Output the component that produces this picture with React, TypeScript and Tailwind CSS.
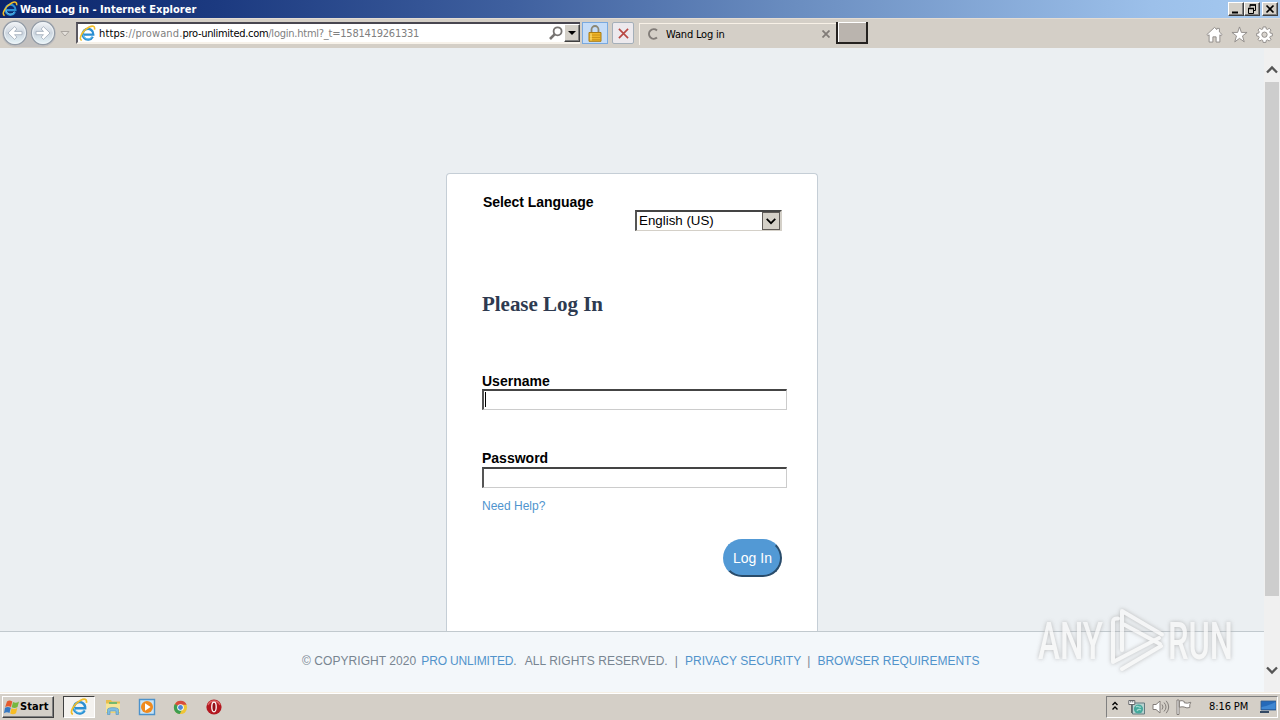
import type { ReactNode } from "react";

const tahoma = "font-['DejaVu_Sans_Condensed','DejaVu_Sans',sans-serif]";

function IeIcon({ className }: { className: string }) {
  return (
    <svg viewBox="0 0 18 18" className={className} fill="none" aria-hidden>
      <path d="M14.6 12.4A5.7 5.7 0 1 1 15.2 10.2H5" stroke="#2b8fd3" strokeWidth="2.4" />
      <path d="M14 12.2A5.2 5.2 0 0 1 4.3 10" stroke="#6cc8f2" strokeWidth="1" />
      <path d="M3 16.2C-1.3 15.5 3.8 5.7 10.8 2.2C14.4.4 17.2.8 16.4 4.8" stroke="#f1bd28" strokeWidth="1.7" />
    </svg>
  );
}

function NavButton({ flip }: { flip?: boolean }) {
  return (
    <svg viewBox="0 0 26 26" className={flip ? "size-[26px] -scale-x-100" : "size-[26px]"} aria-hidden>
      <defs>
        <linearGradient id="nav" x1="0" y1="0" x2="0" y2="1">
          <stop offset="0" stopColor="#f5f6f8" />
          <stop offset=".5" stopColor="#ccd5df" />
          <stop offset="1" stopColor="#e8f7fb" />
        </linearGradient>
      </defs>
      <circle cx="13" cy="13" r="11.6" fill="url(#nav)" stroke="#929ba6" strokeWidth="1.2" />
      <circle cx="13" cy="13" r="10.4" fill="none" stroke="#eef3f7" />
      <path d="M6 13l6.5-6.3 2.4 2.3-2.4 2.4H20v3.3h-7.5l2.4 2.4-2.4 2.3z" fill="#fff" stroke="#9fabb9" strokeWidth=".8" />
    </svg>
  );
}

function WindowButton({ children }: { children: ReactNode }) {
  return (
    <div className="h-[14px] w-4 border border-t-white border-r-[#404040] border-b-[#404040] border-l-white bg-[#d4d0c8] shadow-[inset_-1px_-1px_0_#808080]">
      <svg viewBox="0 0 14 12" className="h-3 w-[14px]" fill="none" stroke="#000" aria-hidden>
        {children}
      </svg>
    </div>
  );
}

function TitleBar() {
  return (
    <header className="flex h-[18px] items-center bg-[linear-gradient(90deg,#0a246a_0%,#1c3a80_17%,#3f609f_40%,#6a8dc0_62%,#9cc0ea_90%,#a6caf0_100%)] pr-[2px] pl-[2px]">
      <IeIcon className="size-4" />
      <span className={`${tahoma} ml-[2px] text-[11px] leading-none font-bold tracking-[0.02px] whitespace-nowrap text-white`}>
        Wand Log in - Internet Explorer
      </span>
      <div className="ml-auto flex">
        <WindowButton>
          <path d="M3 9.5h6" strokeWidth="2" />
        </WindowButton>
        <WindowButton>
          <path d="M5 2h6M5 1.5v3M10.5 2v5.5H8M3 5.5h5.5M3.5 5v5.5h5V5" />
          <path d="M3 5.5h6M5 2h6" strokeWidth="1.6" />
        </WindowButton>
        <div className="ml-[2px]">
          <WindowButton>
            <path d="M3.5 2.5l7 7m0-7l-7 7" strokeWidth="1.7" />
          </WindowButton>
        </div>
      </div>
    </header>
  );
}

function Toolbar() {
  return (
    <div className={`${tahoma} flex h-[30px] border-t border-[#e4dcd3] bg-[#d4cfc7] text-[11px]`}>
      <div className="mt-[1px] ml-[2px] flex h-[27px] w-[54px] gap-[2px] rounded-full bg-[#c2c0bf]">
        <NavButton />
        <NavButton flip />
      </div>
      <svg viewBox="0 0 10 8" className="mt-[11px] ml-[4px] h-2 w-[10px]" fill="#e5e1dc" stroke="#aaa5a0" aria-hidden>
        <path d="M1 1.5h8L5 6z" />
      </svg>

      <div className="mt-[3px] ml-[6px] flex h-[22px] w-[504px] items-center border-t-2 border-b-2 border-l-2 border-t-[#484650] border-b-[#f7f2ea] border-l-[#5b5961] bg-white pl-[1px]">
        <IeIcon className="size-[17px] shrink-0" />
        <span className="ml-[3px] pt-[1px] leading-none whitespace-nowrap text-[#808080]">
          <span className="tracking-[0.12px]">
            <span className="text-black">https</span>://prowand.
          </span>
          <span className="tracking-[-0.3px] text-black">pro-unlimited.com</span>
          <span className="tracking-[-0.23px]">/login.html?_t=1581419261331</span>
        </span>
        <svg viewBox="0 0 14 14" className="ml-auto size-[14px]" fill="none" stroke="#777472" aria-hidden>
          <circle cx="8.6" cy="5.3" r="4" strokeWidth="1.8" />
          <path d="M5.8 8.2L1 13" strokeWidth="2.6" />
        </svg>
        <div className="ml-[1px] flex h-[18px] w-4 items-center justify-center border border-t-white border-r-[#404040] border-b-[#404040] border-l-white bg-[#d4d0c8] shadow-[inset_-1px_-1px_0_#808080]">
          <svg viewBox="0 0 8 4" className="h-1 w-2" aria-hidden>
            <path d="M0 0h8L4 4z" />
          </svg>
        </div>
      </div>

      <div className="mt-[3px] ml-[2px] flex h-[22px] w-[26px] items-center justify-center border border-[#79a9df] bg-[#c5dcf7]">
        <svg viewBox="0 0 14 17" className="h-[17px] w-[14px]" fill="none" aria-hidden>
          <path d="M3.5 8V4.5a3.5 3.5 0 0 1 7 0V8" stroke="#8c8773" strokeWidth="1.8" />
          <path d="M1 7.5h12v8.8H1z" fill="#eeb529" stroke="#a97b15" />
          <path d="M1.5 10h11M1.5 12.5h11M1.5 14.7h11" stroke="#c18b14" strokeWidth=".8" />
          <path d="M3 8.5v7" stroke="#ffe37b" strokeWidth="1.2" />
        </svg>
      </div>
      <div className="mt-[3px] ml-1 flex h-[22px] w-[22px] items-center justify-center rounded-[2px] border border-[#a4afb9] bg-[#ece9ed]">
        <svg viewBox="0 0 12 12" className="size-[11px]" fill="none" stroke="#b94843" strokeWidth="1.8" aria-hidden>
          <path d="M1 1l10 10M11 1L1 11" />
        </svg>
      </div>

      <div className="mt-[4px] ml-[5px] flex h-[22px] w-[197px] items-center border-t border-l border-[#f8f1e7] pl-[7px]">
        <svg viewBox="0 0 12 12" className="mb-[2px] size-3" fill="none" stroke="#817c78" strokeWidth="2" aria-hidden>
          <path d="M10 2.4A4.8 4.8 0 1 0 10 9.6" />
        </svg>
        <span className="mb-[1px] ml-[7px] leading-none tracking-[-0.18px] whitespace-nowrap">Wand Log in</span>
        <svg viewBox="0 0 8 8" className="mr-[6px] mb-[2px] ml-auto size-2" fill="none" stroke="#817c78" strokeWidth="1.8" aria-hidden>
          <path d="M.5.5l7 7M7.5.5l-7 7" />
        </svg>
      </div>
      <div className="mt-[3px] h-[22px] w-8 border-r-2 border-b-2 border-l-2 border-[#24211f] bg-[#bab4ae] shadow-[inset_1px_1px_0_#fff]" />

      <div className="mt-[7px] mr-[7px] ml-auto flex gap-[8px]">
        <svg viewBox="0 0 18 18" className="size-[17px]" fill="#fff" stroke="#8f8b88" aria-hidden>
          <path d="M1 9L9 1.5l2.5 2.3V2.5h2.7v3.8L17 9l-1 1.3-1.3-1V17h-4v-5.5H7.3V17h-4V9.3L2 10.3z" />
        </svg>
        <svg viewBox="0 0 18 18" className="size-[17px]" fill="#fff" stroke="#8f8b88" aria-hidden>
          <path d="M9 1l2 5.8h6l-4.8 3.7L14 16.8l-5-3.7-5 3.7 1.8-6.3L1 6.8h6z" />
        </svg>
        <svg viewBox="0 0 18 18" className="size-[17px]" fill="#fff" stroke="#8f8b88" aria-hidden>
          <path d="M7.5 1h3l.4 2.2 1.3.5L14 2.4 15.9 4.3l-1.3 1.9.5 1.3 2.2.4v2.6l-2.2.5-.5 1.3 1.3 1.8-1.9 1.9-1.8-1.3-1.3.5-.4 2.2h-3l-.4-2.2-1.3-.5L4 16l-1.9-1.9 1.3-1.8-.5-1.3-2.2-.5V7.9l2.2-.4.5-1.3L2.1 4.3 4 2.4l1.8 1.3 1.3-.5z" />
          <circle cx="9" cy="9.2" r="2.8" fill="#d8d4ce" />
        </svg>
      </div>
    </div>
  );
}

function Field({ label, focused }: { label: string; focused?: boolean }) {
  return (
    <label className="block">
      <span className={focused ? "block h-4 text-[14px] leading-4 font-bold" : "block h-4 text-[14px] leading-[14px] font-bold"}>
        {label}
      </span>
      <span className="flex h-[21px] w-[305px] border-t-2 border-r border-b border-l-2 border-t-[#444] border-r-[#ccc] border-b-[#ccc] border-l-[#555] bg-white">
        {focused && <span className="mt-[1px] ml-[1px] h-[15px] w-px bg-black" />}
      </span>
    </label>
  );
}

function LoginCard() {
  return (
    <main className="mx-auto mt-[125px] h-[458px] w-[372px] rounded-t-[4px] border border-b-0 border-[#c5ced6] bg-white pt-[20px] pl-[35px] text-black">
      <div className="pl-[1px] text-[14px] leading-4 font-bold tracking-[-0.05px]">Select Language</div>
      <div className="ml-[153px] flex h-[21px] w-[147px] border-t-2 border-r-2 border-b border-l-2 border-t-[#444] border-r-[#d4d0c8] border-b-[#d4d0c8] border-l-[#555] pl-[2px]">
        <span className="text-[13.33px] leading-[17px] whitespace-nowrap">English (US)</span>
        <span className="ml-auto flex h-[18px] w-[18px] items-center justify-center border border-[#5f5b58] bg-[#d4d0c8]">
          <svg viewBox="0 0 10 7" className="h-[7px] w-[10px]" fill="none" stroke="#000" strokeWidth="1.7" aria-hidden>
            <path d="M.7.8L5 5.2 9.3.8" />
          </svg>
        </span>
      </div>
      <h1 className="mt-[61px] font-['Liberation_Serif',serif] text-[21px] leading-6 font-bold tracking-[-0.03px] text-[#2e3a50]">
        Please Log In
      </h1>
      <div className="mt-[57px]">
        <Field label="Username" focused />
      </div>
      <div className="mt-[41px]">
        <Field label="Password" />
      </div>
      <a className="mt-[10px] block text-[12px] leading-4 text-[#5094ce]">Need Help?</a>
      <button className="mt-[25px] ml-[241px] block h-[38px] w-[59px] rounded-[19px] border-2 border-t-[#5299d5] border-r-[#294c6b] border-b-[#294c6b] border-l-[#5299d5] bg-[#5299d5] text-[14px] whitespace-nowrap text-white">
        Log In
      </button>
    </main>
  );
}

function Footer() {
  return (
    <footer className="flex h-[61px] items-center border-t border-[#c1c9ce] bg-[#f3f7fa] pb-[2px] pl-[302px] text-[12px] whitespace-pre text-[#788591]">
      <span className="tracking-[0.06px]">© COPYRIGHT 2020</span>
      <a className="ml-[5px] tracking-[-0.15px] text-[#5193cb]">PRO UNLIMITED</a>
      <span>.</span>
      <span className="ml-[8px] tracking-[0.05px]">ALL RIGHTS RESERVED.</span>
      <span className="ml-[7px]">|</span>
      <a className="ml-[7px] tracking-[0.05px] text-[#5193cb]">PRIVACY SECURITY</a>
      <span className="ml-[6px]">|</span>
      <a className="ml-[7px] text-[#5193cb]">BROWSER REQUIREMENTS</a>
    </footer>
  );
}

function Scrollbar() {
  return (
    <div className="flex w-4 flex-col items-center bg-[#f0f0f0] pt-[17px]">
      <svg viewBox="0 0 12 9" className="h-[9px] w-3" fill="none" stroke="#555" strokeWidth="2.3" aria-hidden>
        <path d="M1 7.5l5-5 5 5" />
      </svg>
      <div className="mt-2 h-[514px] w-[14px] bg-[#cdcdcd]" />
      <svg viewBox="0 0 12 9" className="mt-[70px] h-[9px] w-3" fill="none" stroke="#555" strokeWidth="2.3" aria-hidden>
        <path d="M1 1.5l5 5 5-5" />
      </svg>
    </div>
  );
}

function Watermark() {
  return (
    <svg
      viewBox="0 0 246 76"
      className="pointer-events-none absolute top-[604px] left-[1034px] h-[76px] w-[246px] opacity-80 drop-shadow-[0_0_2px_#aaa]"
      fill="none"
      aria-hidden
    >
      <g fill="#f7f7f7" className="font-['Roboto',sans-serif] text-[51px] font-medium">
        <text x="4" y="55" textLength="65" lengthAdjust="spacingAndGlyphs">
          ANY
        </text>
        <text x="134" y="55" textLength="65" lengthAdjust="spacingAndGlyphs">
          RUN
        </text>
      </g>
      <g stroke="#f7f7f7" strokeWidth="4" strokeLinejoin="round" strokeLinecap="round">
        <path d="M84 14.5Q79 14 79 18V58L125 34" />
        <path d="M88 46V7L128 30.5" />
        <path d="M90 20.5L126 40" />
        <path d="M88 65L127 42" />
      </g>
    </svg>
  );
}

function Taskbar() {
  return (
    <div className={`${tahoma} flex h-7 items-center border-t border-[#f5efe4] bg-[#d4cfc7] pt-[1px] text-[11px] shadow-[inset_0_1px_0_#fff]`}>
      <div className="ml-[2px] flex h-[22px] w-[52px] items-center border border-t-white border-r-[#404040] border-b-[#404040] border-l-white pl-[1px] shadow-[inset_-1px_-1px_0_#808080]">
        <svg viewBox="0 0 16 16" className="size-4 shrink-0" aria-hidden>
          <path d="M3 2.5C5 1 6.5 1.5 8.3 2.5L7 8C5 7 3.3 7 1.2 8z" fill="#e45b2e" />
          <path d="M9 3c2 1 4 .8 6-.6L13.5 8c-2 1.3-4 1.2-5.8.3z" fill="#76b83f" />
          <path d="M1 8.8c2-1.2 4-1 5.8 0L5.5 14C3.8 13 2 13 0 14.2z" fill="#3678c2" />
          <path d="M7.5 9.2c1.8 1 3.8 1 5.8-.3L12 14.2c-2 1.3-4 1.2-5.8.2z" fill="#f7bd25" />
        </svg>
        <span className="font-bold tracking-[0.1px]">Start</span>
      </div>

      <div className="ml-[9px] flex h-[22px] w-8 items-center justify-center border border-t-[#404040] border-r-white border-b-white border-l-[#404040] bg-[#f4f2ef]">
        <IeIcon className="size-[18px]" />
      </div>
      <svg viewBox="0 0 18 18" className="ml-[9px] size-[18px]" aria-hidden>
        <path d="M2 2h5l1 1.5h8V15H2z" fill="#e8bd4c" />
        <path d="M2 5.5h14v9H2z" fill="#f7e597" />
        <path d="M5 4h8v2H5z" fill="#75b96e" />
        <path d="M3.5 11.5c0-2.5 11-2.5 11 0V16.5h-2.5v-3.5h-6v3.5H3.5z" fill="#7fbde2" stroke="#5d99bd" strokeWidth=".7" />
      </svg>
      <svg viewBox="0 0 18 18" className="ml-[16px] size-[18px]" aria-hidden>
        <path d="M1.5 1.5h15v15h-15z" fill="#c9e4f7" stroke="#4c92cb" strokeWidth="1.4" />
        <circle cx="9" cy="9" r="6" fill="#f08a1d" />
        <path d="M7 5.3v7.4L12.6 9z" fill="#fff" />
      </svg>
      <svg viewBox="0 0 16 16" className="ml-[17px] size-[15px]" aria-hidden>
        <circle cx="8" cy="8" r="7" fill="#efc536" />
        <path d="M8 8L2 4.5A7 7 0 0 1 14.5 5H8z" fill="#d84b3d" />
        <path d="M8 8L2 4.3A7 7 0 0 0 7.2 15L10 9.5z" fill="#3d9e51" />
        <circle cx="8" cy="8" r="3.5" fill="#fff" />
        <circle cx="8" cy="8" r="2.6" fill="#4c86d6" />
      </svg>
      <svg viewBox="0 0 16 16" className="ml-[18px] size-4" aria-hidden>
        <circle cx="8" cy="8" r="7.6" fill="#b31820" />
        <path d="M2 6a6.5 6.5 0 0 1 12 0" fill="none" stroke="#dc6262" strokeWidth="1.5" />
        <ellipse cx="8" cy="8" rx="2.2" ry="4.8" fill="#941018" stroke="#fff" strokeWidth="1.3" />
      </svg>

      <div className="mr-[2px] ml-auto flex h-[22px] w-[172px] items-center border border-t-[#808080] border-r-white border-b-white border-l-[#808080] pl-[4px]">
        <svg viewBox="0 0 8 10" className="mb-[2px] h-[10px] w-2" fill="none" stroke="#000" strokeWidth="1.4" aria-hidden>
          <path d="M1.5 4L4 1.5 6.5 4M1.5 8.5L4 6l2.5 2.5" />
        </svg>
        <svg viewBox="0 0 17 17" className="ml-[9px] size-[17px]" aria-hidden>
          <path d="M4.5 4h12v11h-12z" fill="#b9d3d0" stroke="#647b80" />
          <circle cx="10.5" cy="10" r="4.6" fill="#45a99c" />
          <path d="M8 8c2-2 3 1 5 0M9 12c1-2 3-2 4-1" fill="none" stroke="#a2dbd0" strokeWidth="1.2" />
          <path d="M.8 1.5h6v4h-6zM3.5 5v9" fill="#fff" stroke="#65696b" />
          <path d="M2.8 1v2.5M4.8 1v2.5" stroke="#65696b" />
        </svg>
        <svg viewBox="0 0 18 16" className="ml-[7px] h-4 w-[18px]" fill="none" stroke="#827d79" aria-hidden>
          <path d="M1 5.5h3L8 2v12l-4-3.5H1z" fill="#fff" />
          <path d="M10 5.5q2 2.5 0 5M12 3.5q4 4.5 0 9M14.2 1.8q5 6.2 0 12.4" />
        </svg>
        <svg viewBox="0 0 17 16" className="ml-[6px] h-4 w-[17px]" fill="#fff" stroke="#827d79" aria-hidden>
          <path d="M1 1h2v14.5H1zM3.3 2q3-1 5 .5v1.3q3 1 6.5-.5-1.5 2-1 5.2-3 1-5.5-.4V8q-2-.5-5 .2z" />
        </svg>
        <span className="ml-[16px] tracking-[-0.1px] whitespace-nowrap">8:16 PM</span>
        <svg viewBox="0 0 16 14" className="mr-[1px] ml-auto h-[14px] w-4" aria-hidden>
          <path d="M1 1h15v9H1z" fill="#2469b9" stroke="#365b89" strokeWidth=".8" />
          <path d="M1.5 7Q8 6 15.5 2v7h-14z" fill="#3f87d2" />
          <path d="M0 11h9v2H0z" fill="#334963" />
        </svg>
      </div>
    </div>
  );
}

export default function App() {
  return (
    <div className="relative flex h-[720px] w-[1280px] flex-col overflow-hidden bg-[#ebeff2] font-['Liberation_Sans',Arial,sans-serif]">
      <TitleBar />
      <Toolbar />
      <div className="flex h-[644px]">
        <div className="w-[1264px]">
          <LoginCard />
          <Footer />
        </div>
        <Scrollbar />
      </div>
      <Taskbar />
      <Watermark />
    </div>
  );
}
